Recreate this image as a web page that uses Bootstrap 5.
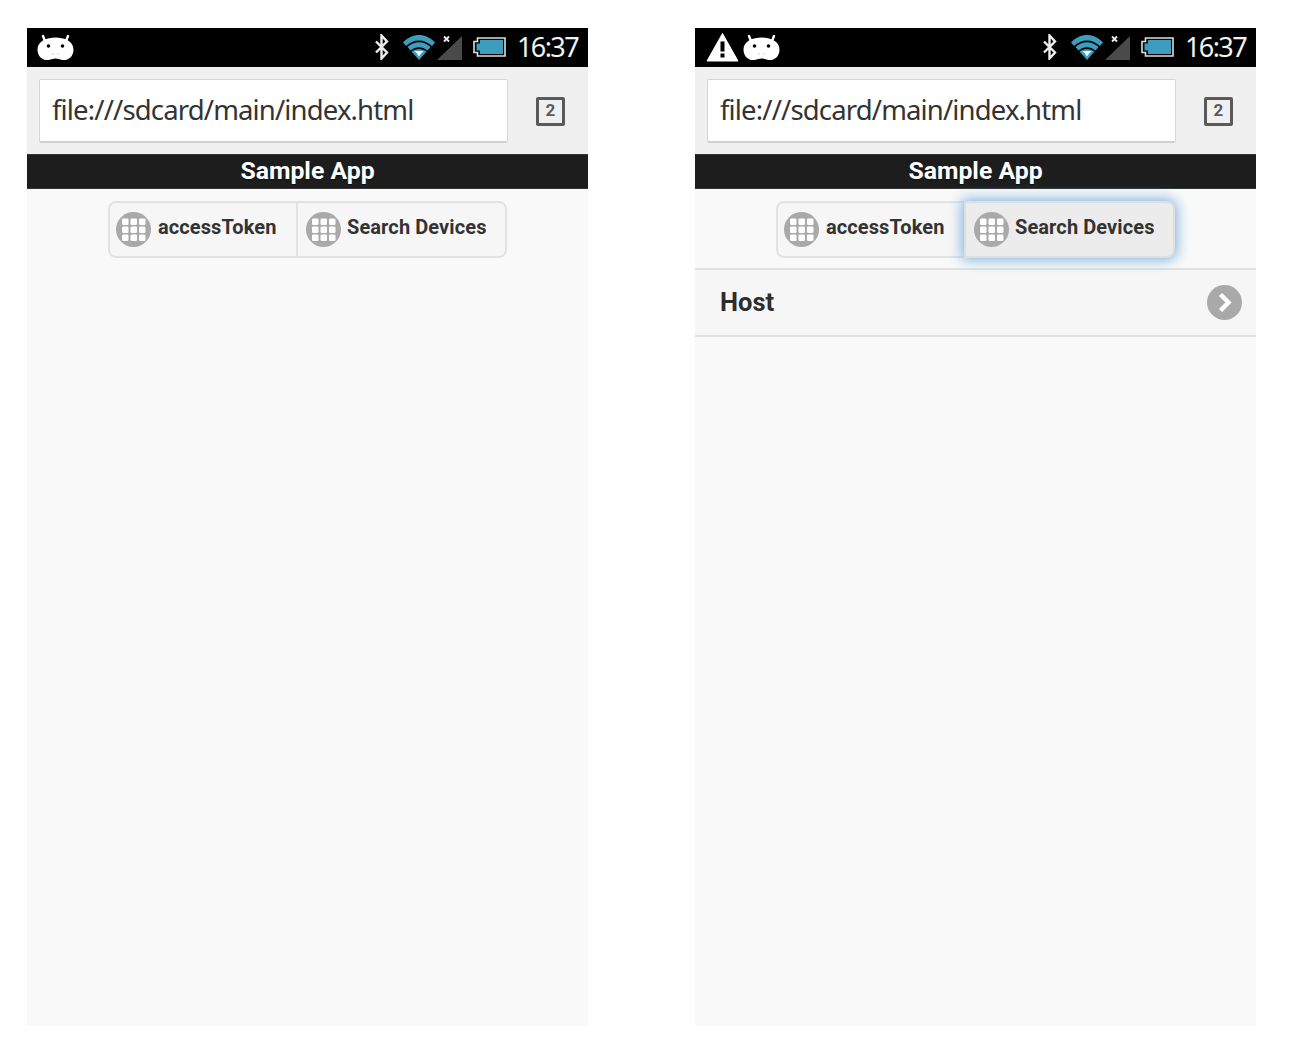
<!DOCTYPE html>
<html lang="en">
<head>
  <meta charset="UTF-8">
  <title>Sample App</title>
  <link href="https://cdn.jsdelivr.net/npm/bootstrap@5.3.0/dist/css/bootstrap.min.css" rel="stylesheet">
  <style>
    body {
      background: #fff;
      height: 1050px;
      overflow: hidden;
      font-family: Roboto, sans-serif;
    }

    .stage {
      padding: 28px 0 0 27px;
      gap: 107px;
    }

    .phone {
      width: 561px;
      height: 998px;
      background: #f9f9f9;
    }

    .status-bar {
      height: 39px;
      background: #000;
      padding: 0 10px 1px 10px;
    }

    .warn-gap {
      margin-left: 1px;
    }

    .status-time {
      font-family: "Noto Sans", sans-serif;
      font-size: 27px;
      line-height: 38px;
      letter-spacing: -1.6px;
      color: #f2f2f2;
      margin-left: 11px;
    }

    .gap-wifi { margin-left: 13px; }
    .gap-signal { margin-left: 2px; }
    .gap-batt { margin-left: 11px; }

    .addr-bar {
      height: 87px;
      background: #f0f0f0;
      padding: 12px 0 12px 12px;
    }

    .addr-input {
      width: 469px;
      height: 64px;
      background: #fff;
      border: 1px solid #d6d6d6;
      border-bottom: 2px solid #cfcfcf;
      border-radius: 2px;
      padding-left: 12px;
      font-family: "Noto Sans", sans-serif;
      font-size: 27.5px;
      line-height: 60px;
      color: #333;
      letter-spacing: -0.85px;
    }

    .tab-count {
      width: 29px;
      height: 29px;
      margin: 1px 0 0 28px;
      border: 3px solid #5a5a5a;
      border-radius: 2px;
      font-size: 17px;
      font-weight: 700;
      color: #5a5a5a;
    }

    .app-title {
      height: 35px;
      background: #1d1d1d;
      border-top: 1px solid #333;
      border-bottom: 1px solid #333;
      color: #fff;
      font-size: 24.800px;
      font-weight: 700;
      line-height: 32px;
      text-align: center;
      text-shadow: 0 1px 1px #111;
    }

    .btn-row {
      padding: 12px 0 10px;
    }

    .seg {
      height: 57px;
      width: 399px;
      background: #f6f6f6;
      border: 2px solid #e2e2e2;
      border-radius: 8px;
    }

    .seg-item {
      height: 100%;
      color: #333;
      font-size: 20px;
      letter-spacing: .1px;
      font-weight: 700;
      line-height: 1;
      padding-bottom: 5px;
      white-space: nowrap;
    }

    .seg-item svg {
      margin-top: 5px;
    }

    .seg-first {
      width: 188px;
      padding-left: 6px;
      gap: 7px;
      border-right: 2px solid #e2e2e2;
    }

    .seg-second {
      flex: 1;
      padding-left: 8px;
      gap: 6px;
    }

    .seg-focus {
      margin: -2px;
      height: 57px;
      background: #ececec;
      border: 2px solid #dedede;
      border-radius: 0 8px 8px 0;
      box-shadow: 0 0 13px 2px #7fb3e0;
      position: relative;
    }

    .host-row {
      height: 69px;
      background: #f6f6f6;
      border-top: 2px solid #e2e2e2;
      border-bottom: 2px solid #e2e2e2;
      padding: 0 14px 0 25px;
      color: #2d2d2d;
      font-size: 25.500px;
      font-weight: 700;
    }
  </style>
</head>
<body>
  <svg width="0" height="0" class="d-block">
    <defs>
      <symbol id="ic-android" viewBox="0 0 37 28">
        <path d="M8 8 6 3M29 8 31 3" stroke="#fff" stroke-width="2.400" stroke-linecap="round"/>
        <path d="M18.500 4.500C27 4.500 36.500 8 36.500 16.500 36.500 24 31 27.500 25.500 27 22 26.500 21 25.500 18.500 25.500 16 25.500 15 26.500 11.500 27 6 27.500.5 24 .5 16.500.5 8 10 4.500 18.500 4.500Z" fill="#fff"/>
        <circle cx="11.500" cy="13" r="1.800" fill="#000"/>
        <circle cx="25.500" cy="13" r="1.800" fill="#000"/>
        <circle cx="16" cy="21" r=".6" fill="#999"/>
        <circle cx="21" cy="21" r=".6" fill="#999"/>
      </symbol>
      <symbol id="ic-warn" viewBox="0 0 33 30">
        <path d="M16.500 1.500 32 29H1Z" fill="#fff" stroke="#fff" stroke-linejoin="round"/>
        <rect x="14.500" y="9.500" width="4" height="10" fill="#000"/>
        <rect x="14.500" y="21.500" width="4" height="4" fill="#000"/>
      </symbol>
      <symbol id="ic-bt" viewBox="0 0 16 26">
        <path d="M2 7.500 13 18.500 7.500 24.500V1.500L13 7.500 2 18.500" fill="none" stroke="#eee" stroke-width="2.400"/>
      </symbol>
      <symbol id="ic-wifi" viewBox="0 0 32 26">
        <path d="M0 8.500C9-1.500 23-1.500 32 8.500L29 12C21.500 4.500 10.500 4.500 3 12Z" fill="#3d9dbf"/>
        <path d="M4.500 13C11 6.500 21 6.500 27.500 13L24.500 16.500C19.500 12 12.500 12 7.500 16.500Z" fill="#3d9dbf"/>
        <path d="M8.500 17.500C13 14 19 14 23.500 17.500L16 26Z" fill="#3d9dbf"/>
        <path d="M11.500 17H20.500L18 19.500 16 22.500 14 19.500Z" fill="#fff"/>
      </symbol>
      <symbol id="ic-signal" viewBox="0 0 25 25">
        <path d="M0 25 25 1V25Z" fill="#4a4a4a"/>
        <path d="M7 1.500 12 6.500M12 1.500 7 6.500" stroke="#eee" stroke-width="1.800"/>
      </symbol>
      <symbol id="ic-batt" viewBox="0 0 33 20">
        <path d="M4.500 4.500V1H32V19H4.500V15.500H1V4.500Z" fill="none" stroke="#ddd" stroke-width="1.600"/>
        <path d="M7 3H30V17H7V13.500H3.500V6.500H7Z" fill="#3d9dbf"/>
      </symbol>
      <symbol id="ic-grid" viewBox="0 0 35 35">
        <circle cx="17.500" cy="17.500" r="17.500" fill="#a9a9a9"/>
        <g fill="#fff">
          <rect x="6" y="6.500" width="6.500" height="6.500" rx="1.300"/><rect x="14.500" y="6.500" width="6.500" height="6.500" rx="1.300"/><rect x="23" y="6.500" width="6.500" height="6.500" rx="1.300"/>
          <rect x="6" y="14.500" width="6.500" height="6.500" rx="1.300"/><rect x="14.500" y="14.500" width="6.500" height="6.500" rx="1.300"/><rect x="23" y="14.500" width="6.500" height="6.500" rx="1.300"/>
          <rect x="6" y="22.500" width="6.500" height="6.500" rx="1.300"/><rect x="14.500" y="22.500" width="6.500" height="6.500" rx="1.300"/><rect x="23" y="22.500" width="6.500" height="6.500" rx="1.300"/>
        </g>
      </symbol>
    </defs>
  </svg>

  <div class="stage d-flex align-items-start">
    <!-- first phone -->
    <div class="phone">
      <div class="status-bar d-flex align-items-center">
        <svg width="37" height="28"><use href="#ic-android"/></svg>
        <div class="ms-auto d-flex align-items-center">
          <svg width="16" height="26"><use href="#ic-bt"/></svg>
          <svg class="gap-wifi" width="32" height="26"><use href="#ic-wifi"/></svg>
          <svg class="gap-signal" width="25" height="25"><use href="#ic-signal"/></svg>
          <svg class="gap-batt" width="33" height="20"><use href="#ic-batt"/></svg>
          <span class="status-time">16:37</span>
        </div>
      </div>
      <div class="addr-bar d-flex align-items-center">
        <div class="addr-input">file:///sdcard/main/index.html</div>
        <div class="tab-count d-flex align-items-center justify-content-center">2</div>
      </div>
      <div class="app-title">Sample App</div>
      <div class="btn-row d-flex justify-content-center">
        <div class="seg d-flex">
          <div class="seg-item seg-first d-flex align-items-center"><svg width="35" height="35"><use href="#ic-grid"/></svg>accessToken</div>
          <div class="seg-item seg-second d-flex align-items-center"><svg width="35" height="35"><use href="#ic-grid"/></svg>Search Devices</div>
        </div>
      </div>
    </div>

    <!-- second phone, after the search -->
    <div class="phone">
      <div class="status-bar d-flex align-items-center">
        <svg class="warn-gap" width="33" height="30"><use href="#ic-warn"/></svg>
        <svg class="ms-1" width="37" height="28"><use href="#ic-android"/></svg>
        <div class="ms-auto d-flex align-items-center">
          <svg width="16" height="26"><use href="#ic-bt"/></svg>
          <svg class="gap-wifi" width="32" height="26"><use href="#ic-wifi"/></svg>
          <svg class="gap-signal" width="25" height="25"><use href="#ic-signal"/></svg>
          <svg class="gap-batt" width="33" height="20"><use href="#ic-batt"/></svg>
          <span class="status-time">16:37</span>
        </div>
      </div>
      <div class="addr-bar d-flex align-items-center">
        <div class="addr-input">file:///sdcard/main/index.html</div>
        <div class="tab-count d-flex align-items-center justify-content-center">2</div>
      </div>
      <div class="app-title">Sample App</div>
      <div class="btn-row d-flex justify-content-center">
        <div class="seg d-flex">
          <div class="seg-item seg-first d-flex align-items-center"><svg width="35" height="35"><use href="#ic-grid"/></svg>accessToken</div>
          <div class="seg-item seg-second seg-focus d-flex align-items-center"><svg width="35" height="35"><use href="#ic-grid"/></svg>Search Devices</div>
        </div>
      </div>
      <div class="host-row d-flex align-items-center justify-content-between">
        Host
        <svg width="35" height="35" viewBox="0 0 35 35">
          <circle cx="17.500" cy="17.500" r="17.500" fill="#a9a9a9"/>
          <path d="M13.500 9.500 21.500 17.500 13.500 25.500" fill="none" stroke="#fff" stroke-width="4.500"/>
        </svg>
      </div>
    </div>
  </div>

  <script src="https://cdn.jsdelivr.net/npm/bootstrap@5.3.0/dist/js/bootstrap.bundle.min.js"></script>
</body>
</html>
